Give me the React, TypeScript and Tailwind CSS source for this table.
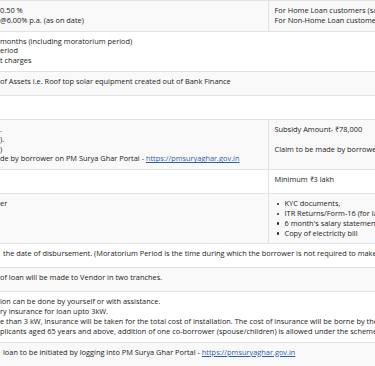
import type { ReactNode } from "react";

const LINK = "https://pmsuryaghar.gov.in";

function Link() {
  return (
    <a href={LINK} className="text-[#2a5db0] underline">
      {LINK}
    </a>
  );
}

function Bullet({ children }: { children: ReactNode }) {
  return (
    <li className="flex items-center">
      <span className="w-[2.5px] h-[2.5px] rounded-full bg-[#222] ml-[2px] mr-[5.5px] shrink-0" />
      {children}
    </li>
  );
}

type Row = {
  main: ReactNode;
  side?: ReactNode;
  tall?: boolean;
};

const rows: Row[] = [
  {
    main: (
      <>
        0.50 %<br />
        @6.00% p.a. (as on date)
      </>
    ),
    side: (
      <>
        For Home Loan customers (salaried/self-employed)
        <br />
        For Non-Home Loan customers
      </>
    ),
  },
  {
    main: (
      <>
        months (including moratorium period)
        <br />
        eriod
        <br />t charges
      </>
    ),
  },
  {
    main: <>of Assets i.e. Roof top solar equipment created out of Bank Finance</>,
    tall: true,
  },
  { main: null, tall: true },
  {
    main: (
      <>
        .<br />
        ).
        <br />)
        <br />
        de by borrower on PM Surya Ghar Portal - <Link />
      </>
    ),
    side: (
      <>
        Subsidy Amount- ₹78,000
        <br />
        <br />
        Claim to be made by borrower on PM Surya Ghar Portal
      </>
    ),
  },
  { main: null, side: <>Minimum ₹3 lakh</>, tall: true },
  {
    main: <>er</>,
    side: (
      <ul>
        <Bullet>KYC documents,</Bullet>
        <Bullet>ITR Returns/Form-16 (for last 2 years)</Bullet>
        <Bullet>6 month's salary statement</Bullet>
        <Bullet>Copy of electricity bill</Bullet>
      </ul>
    ),
  },
  {
    main: (
      <span className="pl-[3px]">
        the date of disbursement. (Moratorium Period is the time during which the borrower is not
        required to make any repayment)
      </span>
    ),
    tall: true,
  },
  { main: <>of loan will be made to Vendor in two tranches.</>, tall: true },
  {
    main: (
      <>
        ion can be done by yourself or with assistance.
        <br />
        ry insurance for loan upto 3kW.
        <br />e than 3 kW, insurance will be taken for the total cost of installation. The cost of
        insurance will be borne by the borrower.
        <br />
        plicants aged 65 years and above, addition of one co-borrower (spouse/children) is allowed
        under the scheme.
      </>
    ),
  },
  {
    main: (
      <span className="pl-[3px]">
        loan to be initiated by logging into PM Surya Ghar Portal - <Link />
      </span>
    ),
    tall: true,
  },
];

export default function App() {
  return (
    <div className="w-[375px] h-[366px] overflow-hidden bg-white font-['Open_Sans',sans-serif] text-[7.4px] leading-[9.8px] text-[#222]">
      <table className="table-fixed border-collapse w-[700px]">
        <colgroup>
          <col className="w-[268px]" />
          <col />
        </colgroup>
        <tbody>
          {rows.map((r, i) => (
            <tr key={i} className={i % 2 === 0 ? "bg-[#f9f9f9]" : "bg-white"}>
              <td
                colSpan={r.side === undefined ? 2 : 1}
                className={`border-t border-b border-[#e3e3e3] align-top whitespace-nowrap py-[5px] pl-0 pr-[6px] ${
                  r.tall ? "h-[24px]" : ""
                }`}
              >
                {r.main}
              </td>
              {r.side !== undefined && (
                <td className="border-t border-b border-l border-[#e3e3e3] align-top whitespace-nowrap py-[5px] pl-[6px] pr-[6px]">
                  {r.side}
                </td>
              )}
            </tr>
          ))}
        </tbody>
      </table>
    </div>
  );
}
